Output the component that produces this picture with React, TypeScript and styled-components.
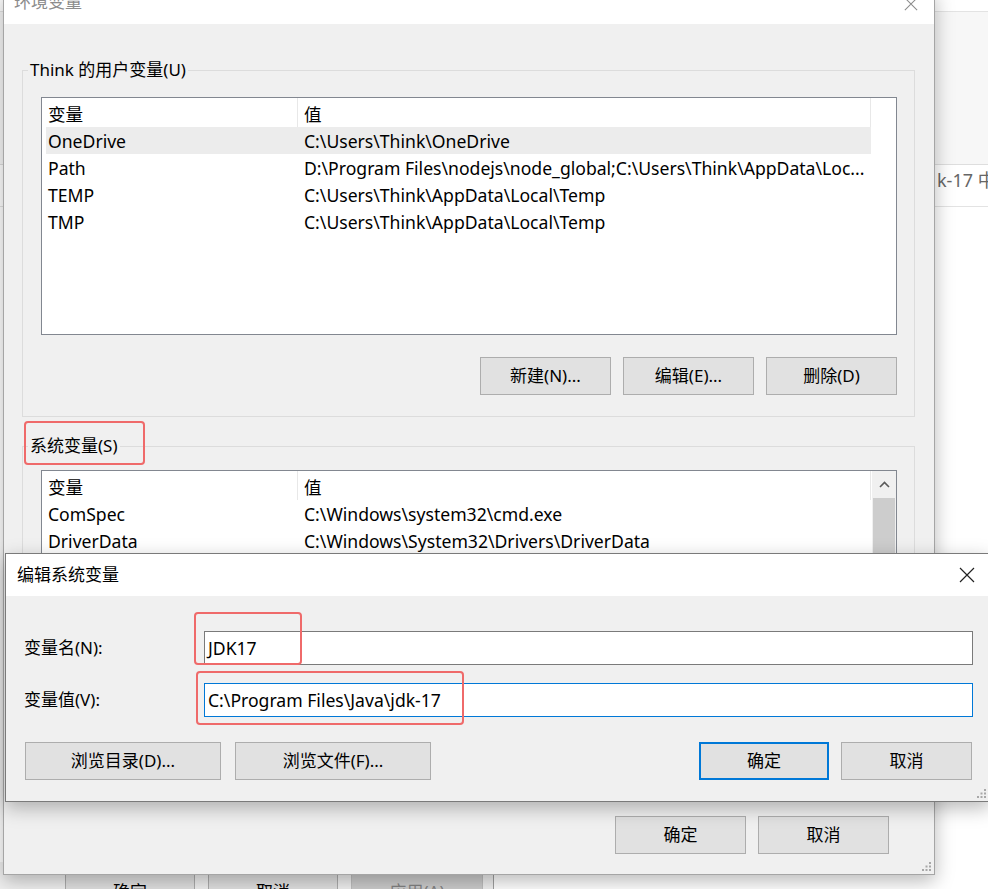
import React from "react";
import styled, { createGlobalStyle, css } from "styled-components";

const Global = createGlobalStyle`
  html, body { margin: 0; padding: 0; background: #fff; }
  body {
    font-family: "Noto Sans", "Noto Sans CJK SC", sans-serif;
    font-size: 17px;
    color: #000;
  }
  * { box-sizing: border-box; }
`;

const Desktop = styled.div`
  position: relative;
  width: 988px;
  height: 889px;
  overflow: hidden;
  background: #fff;
`;

/* ---------- page behind the windows ---------- */
const Backdrop = styled.div`
  display: flex;
  flex-direction: column;
  height: 100%;
`;
const TopStrip = styled.div`
  height: 12px;
  border-bottom: 1px solid #e3e3e3;
`;
const GrayPanel = styled.div`
  height: 153px;
  background: #f7f7f7;
  border-bottom: 1px solid #dedede;
`;
const SearchRow = styled.div`
  height: 42px;
  display: flex;
  align-items: flex-start;
  padding: 3px 0 0 937px;
  border-bottom: 1px solid #e3e3e3;
  color: #666;
  font-size: 18px;
  line-height: 24px;
  white-space: nowrap;
`;

/* ---------- windows ---------- */
const Window = styled.div<{ $left: number; $top: number; $width: number; $height: number; $border: string }>`
  position: absolute;
  left: ${(p) => p.$left}px;
  top: ${(p) => p.$top}px;
  width: ${(p) => p.$width}px;
  height: ${(p) => p.$height}px;
  display: flex;
  flex-direction: column;
  background: #f0f0f0;
  border: 1px solid ${(p) => p.$border};
  box-shadow: 0 6px 18px rgba(0, 0, 0, 0.28);
`;

const TitleBar = styled.div<{ $height: number; $inactive?: boolean; $align: string; $padTop: number; $padLeft: number; $padRight: number }>`
  height: ${(p) => p.$height}px;
  flex: none;
  display: flex;
  align-items: ${(p) => p.$align};
  justify-content: space-between;
  padding: ${(p) => p.$padTop}px ${(p) => p.$padRight}px 0 ${(p) => p.$padLeft}px;
  background: #fff;
  color: ${(p) => (p.$inactive ? "#8c8c8c" : "#000")};
  font-size: 17px;
  line-height: 20px;
`;

const CloseBox = styled.span<{ $color: string; $offset: number }>`
  display: flex;
  margin-top: ${(p) => p.$offset}px;
  color: ${(p) => p.$color};
`;

const CloseIcon = ({ color, size, offset = 0 }: { color: string; size: number; offset?: number }) => (
  <CloseBox $color={color} $offset={offset}>
    <svg width={size} height={size} viewBox="0 0 16 16">
      <path d="M1 1 L15 15 M15 1 L1 15" stroke="currentColor" strokeWidth="1.2" fill="none" />
    </svg>
  </CloseBox>
);

const Grip = styled.span`
  position: absolute;
  right: 3px;
  bottom: 3px;
  display: flex;
`;
const ResizeGrip = () => (
  <Grip>
    <svg width="10" height="10" viewBox="0 0 10 10" fill="#a8a8a8">
      <rect x="8" y="1" width="2" height="2" />
      <rect x="8" y="4.5" width="2" height="2" />
      <rect x="4.5" y="4.5" width="2" height="2" />
      <rect x="8" y="8" width="2" height="2" />
      <rect x="4.5" y="8" width="2" height="2" />
      <rect x="1" y="8" width="2" height="2" />
    </svg>
  </Grip>
);

/* ---------- main window body ---------- */
const MainBody = styled.div`
  flex: 1;
  display: flex;
  flex-direction: column;
  padding: 34px 19px 20px 18px;
`;

const Group = styled.fieldset<{ $gapTop: number }>`
  margin: ${(p) => p.$gapTop}px 0 0 0;
  border: 1px solid #dcdcdc;
  padding: 0 17px 21px 18px;
  min-width: 0;
`;

const Legend = styled.legend`
  position: relative;
  padding: 0 2px;
  margin-left: -13px;
  line-height: 24px;
  height: 24px;
  font-size: 17px;
  white-space: nowrap;
`;

const GroupInner = styled.div<{ $padTop: number }>`
  padding-top: ${(p) => p.$padTop}px;
  display: flex;
  flex-direction: column;
`;

const ListView = styled.div<{ $height: number }>`
  height: ${(p) => p.$height}px;
  border: 1px solid #828790;
  background: #fff;
  display: flex;
  overflow: hidden;
`;

const Table = styled.div`
  flex: 1;
  padding-left: 4px;
  display: flex;
  flex-direction: column;
`;

const Row = styled.div<{ $header?: boolean; $selected?: boolean }>`
  display: grid;
  grid-template-columns: 252px 573px;
  height: ${(p) => (p.$header ? 29 : 27)}px;
  align-items: center;
  background: ${(p) => (p.$selected ? "#ececec" : "transparent")};
  width: 825px;
  font-size: 17.6px;
  line-height: 20px;
  white-space: nowrap;
`;

const Cell = styled.div<{ $first?: boolean; $header?: boolean }>`
  height: 100%;
  display: flex;
  align-items: center;
  padding-left: ${(p) => (p.$first ? 2 : 6)}px;
  padding-top: ${(p) => (p.$header ? 2 : 0)}px;
  overflow: hidden;
  ${(p) =>
    p.$header &&
    css`
      border-right: 1px solid #e8e8e8;
    `}
`;

const ScrollBar = styled.div`
  width: 24px;
  flex: none;
  background: #f0f0f0;
  display: flex;
  flex-direction: column;
`;
const ScrollArrow = styled.div`
  height: 27px;
  display: flex;
  align-items: center;
  justify-content: center;
  color: #5a5a5a;
`;
const ScrollThumb = styled.div`
  height: 160px;
  margin: 0 1px;
  background: #cdcdcd;
`;

const ButtonRow = styled.div<{ $gapTop: number; $gap: number }>`
  display: flex;
  justify-content: flex-end;
  gap: ${(p) => p.$gap}px;
  margin-top: ${(p) => p.$gapTop}px;
`;

const Button = styled.button<{ $width: number; $default?: boolean; $disabled?: boolean }>`
  width: ${(p) => p.$width}px;
  height: 38px;
  flex: none;
  background: ${(p) => (p.$disabled ? "#cccccc" : "#e1e1e1")};
  border: 1px solid ${(p) => (p.$default ? "#0078d7" : p.$disabled ? "#bfbfbf" : "#adadad")};
  box-shadow: ${(p) => (p.$default ? "inset 0 0 0 1px #0078d7" : "none")};
  color: ${(p) => (p.$disabled ? "#838383" : "#000")};
  font-family: "Noto Sans", "Noto Sans CJK SC", sans-serif;
  font-size: 17px;
  line-height: 20px;
  padding: 0;
  border-radius: 0;
`;

const Footer = styled.div`
  margin-top: auto;
  display: flex;
  justify-content: flex-end;
  gap: 12px;
  padding-right: 26px;
`;

/* ---------- red annotation ---------- */
const Mark = styled.span<{ $left: number; $top: number; $w: number; $h: number }>`
  position: absolute;
  left: ${(p) => p.$left}px;
  top: ${(p) => p.$top}px;
  width: ${(p) => p.$w}px;
  height: ${(p) => p.$h}px;
  border: 2px solid #ef6a6a;
  border-radius: 4px;
  pointer-events: none;
`;

/* ---------- edit dialog ---------- */
const EditBody = styled.div`
  flex: 1;
  display: flex;
  flex-direction: column;
  padding: 35px 16px 20px 18px;
`;
const FieldGrid = styled.div`
  display: grid;
  grid-template-columns: 180px 1fr;
  row-gap: 18px;
  align-items: center;
`;
const FieldLabel = styled.label`
  font-size: 17px;
  line-height: 20px;
  white-space: nowrap;
`;
const FieldBox = styled.div`
  position: relative;
`;
const TextBox = styled.div<{ $focused?: boolean }>`
  height: 34px;
  display: flex;
  align-items: center;
  padding: 0 0 1px 3px;
  background: #fff;
  border: 1px solid ${(p) => (p.$focused ? "#0078d7" : "#7a7a7a")};
  font-size: 17.6px;
  white-space: nowrap;
`;
const EditButtons = styled.div`
  display: flex;
  justify-content: space-between;
  margin-top: 25px;
  padding-left: 1px;
  padding-right: 1px;
`;
const BtnGroup = styled.div<{ $gap: number }>`
  display: flex;
  gap: ${(p) => p.$gap}px;
`;

/* ---------- window behind ---------- */
const BehindWindow = styled.div`
  position: absolute;
  left: -10px;
  top: 862px;
  width: 504px;
  height: 60px;
  background: #f0f0f0;
  border-right: 1px solid #a0a0a0;
  display: flex;
  justify-content: flex-end;
  gap: 13px;
  padding: 11px 10px 0 0;
`;

const userVars = [
  ["OneDrive", "C:\\Users\\Think\\OneDrive"],
  ["Path", "D:\\Program Files\\nodejs\\node_global;C:\\Users\\Think\\AppData\\Loc..."],
  ["TEMP", "C:\\Users\\Think\\AppData\\Local\\Temp"],
  ["TMP", "C:\\Users\\Think\\AppData\\Local\\Temp"],
];

const sysVars = [
  ["ComSpec", "C:\\Windows\\system32\\cmd.exe"],
  ["DriverData", "C:\\Windows\\System32\\Drivers\\DriverData"],
];

const Header = () => (
  <Row $header>
    <Cell $first $header>变量</Cell>
    <Cell $header>值</Cell>
  </Row>
);

export default function App() {
  return (
    <Desktop>
      <Global />
      <Backdrop>
        <TopStrip />
        <GrayPanel />
        <SearchRow>k-17 中的</SearchRow>
      </Backdrop>

      <BehindWindow>
        <Button $width={130}>确定</Button>
        <Button $width={130}>取消</Button>
        <Button $width={132} $disabled>应用(A)</Button>
      </BehindWindow>

      {/* 环境变量 */}
      <Window $left={3} $top={-10} $width={932} $height={885} $border="#a5a5a5">
        <TitleBar $height={33} $inactive $align="flex-start" $padTop={1} $padLeft={10} $padRight={16}>
          <span>环境变量</span>
          <CloseIcon color="#8c8c8c" size={14} offset={5} />
        </TitleBar>
        <MainBody>
          <Group $gapTop={0}>
            <Legend>Think 的用户变量(U)</Legend>
            <GroupInner $padTop={15}>
              <ListView $height={238}>
                <Table>
                  <Header />
                  {userVars.map(([k, v], i) => (
                    <Row key={k} $selected={i === 0}>
                      <Cell $first>{k}</Cell>
                      <Cell>{v}</Cell>
                    </Row>
                  ))}
                </Table>
              </ListView>
              <ButtonRow $gapTop={22} $gap={12}>
                <Button $width={131}>新建(N)...</Button>
                <Button $width={131}>编辑(E)...</Button>
                <Button $width={131}>删除(D)</Button>
              </ButtonRow>
            </GroupInner>
          </Group>

          <Group $gapTop={17}>
            <Legend>
              系统变量(S)
              <Mark $left={-4} $top={-13} $w={121} $h={44} />
            </Legend>
            <GroupInner $padTop={12}>
              <ListView $height={300}>
                <Table>
                  <Header />
                  {sysVars.map(([k, v]) => (
                    <Row key={k}>
                      <Cell $first>{k}</Cell>
                      <Cell>{v}</Cell>
                    </Row>
                  ))}
                </Table>
                <ScrollBar>
                  <ScrollArrow>
                    <svg width="11" height="7" viewBox="0 0 11 7">
                      <path d="M1 6 L5.5 1.5 L10 6" stroke="currentColor" strokeWidth="1.6" fill="none" />
                    </svg>
                  </ScrollArrow>
                  <ScrollThumb />
                </ScrollBar>
              </ListView>
            </GroupInner>
          </Group>

          <Footer>
            <Button $width={131}>确定</Button>
            <Button $width={131}>取消</Button>
          </Footer>
        </MainBody>
        <ResizeGrip />
      </Window>

      {/* 编辑系统变量 */}
      <Window $left={5} $top={553} $width={985} $height={249} $border="#7a7a7a">
        <TitleBar $height={42} $align="center" $padTop={0} $padLeft={11} $padRight={14}>
          <span>编辑系统变量</span>
          <CloseIcon color="#222" size={16} />
        </TitleBar>
        <EditBody>
          <FieldGrid>
            <FieldLabel>变量名(N):</FieldLabel>
            <FieldBox>
              <TextBox>JDK17</TextBox>
              <Mark $left={-10} $top={-19} $w={108} $h={53} />
            </FieldBox>
            <FieldLabel>变量值(V):</FieldLabel>
            <FieldBox>
              <TextBox $focused>C:\Program Files\Java\jdk-17</TextBox>
              <Mark $left={-8} $top={-12} $w={268} $h={54} />
            </FieldBox>
          </FieldGrid>
          <EditButtons>
            <BtnGroup $gap={14}>
              <Button $width={196}>浏览目录(D)...</Button>
              <Button $width={196}>浏览文件(F)...</Button>
            </BtnGroup>
            <BtnGroup $gap={12}>
              <Button $width={130} $default>确定</Button>
              <Button $width={131}>取消</Button>
            </BtnGroup>
          </EditButtons>
        </EditBody>
        <ResizeGrip />
      </Window>
    </Desktop>
  );
}
